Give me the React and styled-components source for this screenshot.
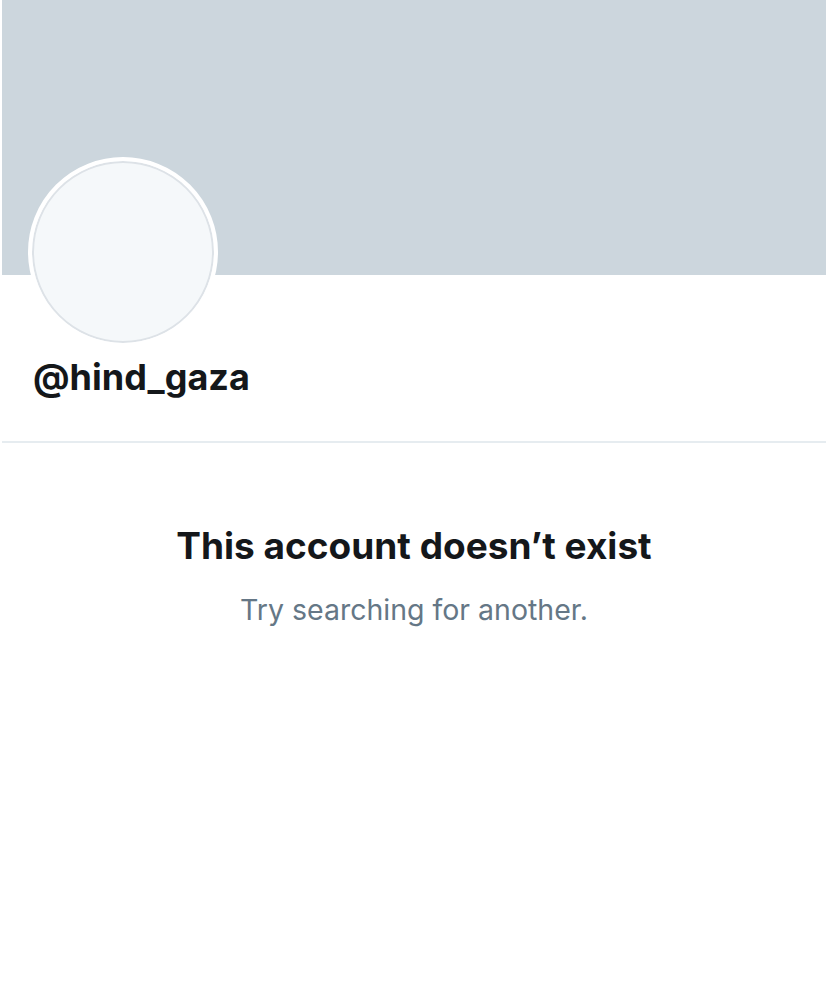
import React from "react";
import styled, { createGlobalStyle } from "styled-components";

const Global = createGlobalStyle`
  html, body { margin: 0; padding: 0; background: #ffffff; }
  body { font-family: Inter, "Noto Sans", sans-serif; }
`;

const Page = styled.div`
  width: 824px;
  margin-left: 2px;
  min-height: 981px;
  background: #ffffff;
`;

const Banner = styled.div`
  height: 275px;
  background: #ccd6dd;
`;

const Header = styled.div`
  display: flex;
  flex-direction: column;
  align-items: flex-start;
  padding: 0 0 42px 26px;
  border-bottom: 2px solid #e6ecf0;
`;

const Avatar = styled.div`
  margin-top: -118px;
  width: 182px;
  height: 182px;
  border-radius: 50%;
  border: 4px solid #ffffff;
  background: #f5f8fa;
  box-shadow: inset 0 0 0 2px #dde2e7;
`;

const Handle = styled.div`
  margin: 8px 0 0 5px;
  font-size: 36px;
  line-height: 44px;
  font-weight: 700;
  color: #14171a;
`;

const Empty = styled.div`
  display: flex;
  flex-direction: column;
  align-items: center;
  padding-top: 80px;
`;

const Title = styled.div`
  font-size: 37px;
  font-weight: 700;
  color: #14171a;
`;

const Sub = styled.div`
  margin-top: 24px;
  font-size: 28.5px;
  color: #657786;
`;

export default function App() {
  return (
    <>
      <Global />
      <Page>
        <Banner />
        <Header>
          <Avatar />
          <Handle>@hind_gaza</Handle>
        </Header>
        <Empty>
          <Title>This account doesn’t exist</Title>
          <Sub>Try searching for another.</Sub>
        </Empty>
      </Page>
    </>
  );
}
